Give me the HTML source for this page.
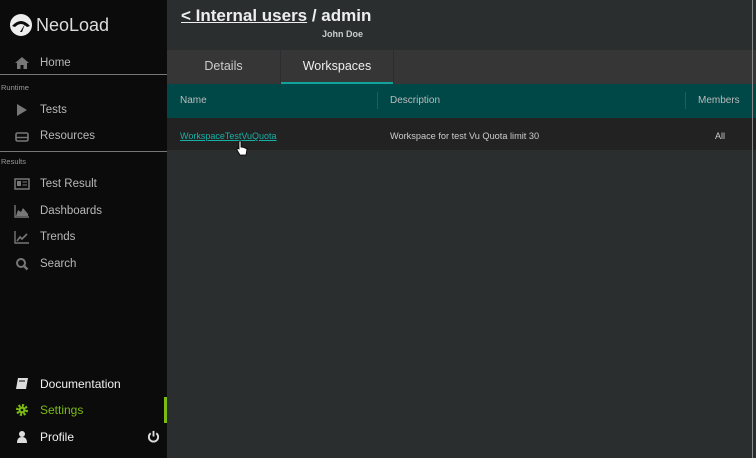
<!DOCTYPE html>
<html><head><meta charset="utf-8"><style>
*{margin:0;padding:0;box-sizing:border-box}
body{width:756px;height:458px;overflow:hidden;background:#2a2e2e;font-family:"Liberation Sans",sans-serif;position:relative}
#sb{position:absolute;left:0;top:0;width:167px;height:458px;background:#0b0b0b}
.it{position:absolute;left:14px;color:#b8b8b8;font-size:11.5px;display:flex;align-items:center}
.it svg{width:16px;height:14px;margin-right:10px}
.sec{position:absolute;left:1px;font-size:7.5px;color:#999}
.hr{position:absolute;left:0;width:167px;height:1px;background:#777}
#main{position:absolute;left:167px;top:0;right:0;height:458px}
.abs{position:absolute}
</style></head><body>
<div id="sb">
 <div class="abs" style="left:9px;top:13px;display:flex;align-items:center">
  <svg width="24" height="24" viewBox="0 0 24 24"><circle cx="12" cy="12" r="11" fill="#eee"/><path d="M3 13 Q12 3 21 13 L18 14 Q12 8 6 14Z" fill="#0b0b0b"/><path d="M11 19 L16 11 L13 19Z" fill="#0b0b0b"/></svg>
  <span style="color:#ddd;font-size:18px;margin-left:3px">NeoLoad</span>
 </div>
 <div class="it" style="top:56px"><svg viewBox="0 0 16 14"><path d="M8 1 L1 7 H3 V13 H6.5 V9 H9.5 V13 H13 V7 H15Z" fill="#777"/></svg>Home</div>
 <div class="hr" style="top:74px"></div>
 <div class="sec" style="top:83px">Runtime</div>
 <div class="it" style="top:103px"><svg viewBox="0 0 16 14"><path d="M3 1 L13 7 L3 13Z" fill="#777"/></svg>Tests</div>
 <div class="it" style="top:129px"><svg viewBox="0 0 16 14"><rect x="2" y="4" width="12" height="8" rx="1.5" fill="none" stroke="#777" stroke-width="1.6"/><line x1="2" y1="8.5" x2="14" y2="8.5" stroke="#777" stroke-width="1.4"/></svg>Resources</div>
 <div class="hr" style="top:151px"></div>
 <div class="sec" style="top:157px">Results</div>
 <div class="it" style="top:177px"><svg viewBox="0 0 16 14"><rect x="1" y="2" width="14" height="10" fill="none" stroke="#777" stroke-width="1.5"/><rect x="3" y="4" width="4" height="5" fill="#777"/><line x1="8.5" y1="5" x2="13" y2="5" stroke="#777"/><line x1="8.5" y1="8" x2="13" y2="8" stroke="#777"/></svg>Test Result</div>
 <div class="it" style="top:204px"><svg viewBox="0 0 16 14"><path d="M1 1 V13 H15" fill="none" stroke="#777" stroke-width="1.4"/><path d="M2 12 L4 6 L7 8 L9 4 L14 10 V12Z" fill="#777"/></svg>Dashboards</div>
 <div class="it" style="top:230px"><svg viewBox="0 0 16 14"><path d="M1 1 V13 H15" fill="none" stroke="#777" stroke-width="1.4"/><path d="M3 11 L6 7 L8 9 L13 4" fill="none" stroke="#777" stroke-width="1.6"/></svg>Trends</div>
 <div class="it" style="top:257px"><svg viewBox="0 0 16 14"><circle cx="7" cy="6" r="4" fill="none" stroke="#777" stroke-width="2"/><line x1="10" y1="9" x2="13.5" y2="12.5" stroke="#777" stroke-width="2.4"/></svg>Search</div>
 <div class="it" style="top:377px;color:#f0f0f0;font-size:12px"><svg viewBox="0 0 16 14"><path d="M4 1 H14 L12 12 H2Z" fill="#ddd"/><line x1="5" y1="4" x2="11" y2="4" stroke="#0b0b0b"/></svg>Documentation</div>
 <div class="it" style="top:403px;color:#7cbb12;font-size:12px"><svg viewBox="0 0 16 14"><circle cx="8" cy="7" r="4.5" fill="none" stroke="#7cbb12" stroke-width="3" stroke-dasharray="2 1.5"/><circle cx="8" cy="7" r="3.5" fill="#7cbb12"/><circle cx="8" cy="7" r="1.3" fill="#0b0b0b"/></svg>Settings</div>
 <div class="abs" style="left:164px;top:397px;width:3px;height:26px;background:#7cbb12"></div>
 <div class="it" style="top:430px;color:#f0f0f0;font-size:12px"><svg viewBox="0 0 16 14"><circle cx="8" cy="4" r="3" fill="#ddd"/><path d="M3 13 Q3 7 8 7 Q13 7 13 13Z" fill="#ddd"/></svg>Profile</div>
 <svg class="abs" style="left:147px;top:430px" width="13" height="13" viewBox="0 0 14 14"><path d="M4 3.5 A5 5 0 1 0 10 3.5" fill="none" stroke="#ddd" stroke-width="2"/><line x1="7" y1="1" x2="7" y2="7" stroke="#ddd" stroke-width="2"/></svg>
</div>
<div id="main">
 <div class="abs" style="left:14px;top:6px;color:#eee;font-size:17px;font-weight:bold"><span style="text-decoration:underline">&lt; Internal users</span> / admin</div>
 <div class="abs" style="left:155px;top:29px;color:#ccc;font-size:9px;font-weight:bold">John Doe</div>
 <div class="abs" style="left:0;top:50px;width:589px;height:34px;background:#363636"></div>
 <div class="abs" style="left:0;top:50px;width:113px;height:34px;color:#ccc;font-size:12.5px;text-align:center;line-height:33px">Details</div>
 <div class="abs" style="left:113px;top:50px;width:1px;height:34px;background:#2a2e2e"></div>
 <div class="abs" style="left:114px;top:50px;width:112px;height:34px;color:#eee;font-size:12.5px;text-align:center;line-height:33px;border-bottom:2px solid #11a39a">Workspaces</div>
 <div class="abs" style="left:226px;top:50px;width:1px;height:34px;background:#2a2e2e"></div>
 <div class="abs" style="left:0;top:84px;width:589px;height:34px;background:#004848"></div>
 <div class="abs" style="left:13px;top:95px;color:#bbb;font-size:10px">Name</div>
 <div class="abs" style="left:210px;top:92px;width:1px;height:17px;background:#1c5f5c"></div>
 <div class="abs" style="left:223px;top:95px;color:#bbb;font-size:10px">Description</div>
 <div class="abs" style="left:518px;top:92px;width:1px;height:17px;background:#1c5f5c"></div>
 <div class="abs" style="left:531px;top:95px;color:#bbb;font-size:10px">Members</div>
 <div class="abs" style="left:0;top:118px;width:589px;height:32px;background:#222"></div>
 <div class="abs" style="left:13px;top:131px;color:#16b1a6;font-size:9px;text-decoration:underline">WorkspaceTestVuQuota</div>
 <div class="abs" style="left:223px;top:131px;color:#ccc;font-size:9.2px">Workspace for test Vu Quota limit 30</div>
 <div class="abs" style="left:548px;top:131px;color:#ccc;font-size:9px">All</div>
 <svg class="abs" style="left:69px;top:140px" width="12" height="16" viewBox="0 0 12 16"><path d="M3 1 V9 L1.5 8 L1 10 L4 15 H10 L11 9 L8 7.5 L5 7 V1Z" fill="#fff" stroke="#000" stroke-width="0.8"/></svg>
 <div class="abs" style="left:585px;top:0;width:1px;height:458px;background:#8a8a8a"></div>
</div>
</body></html>
